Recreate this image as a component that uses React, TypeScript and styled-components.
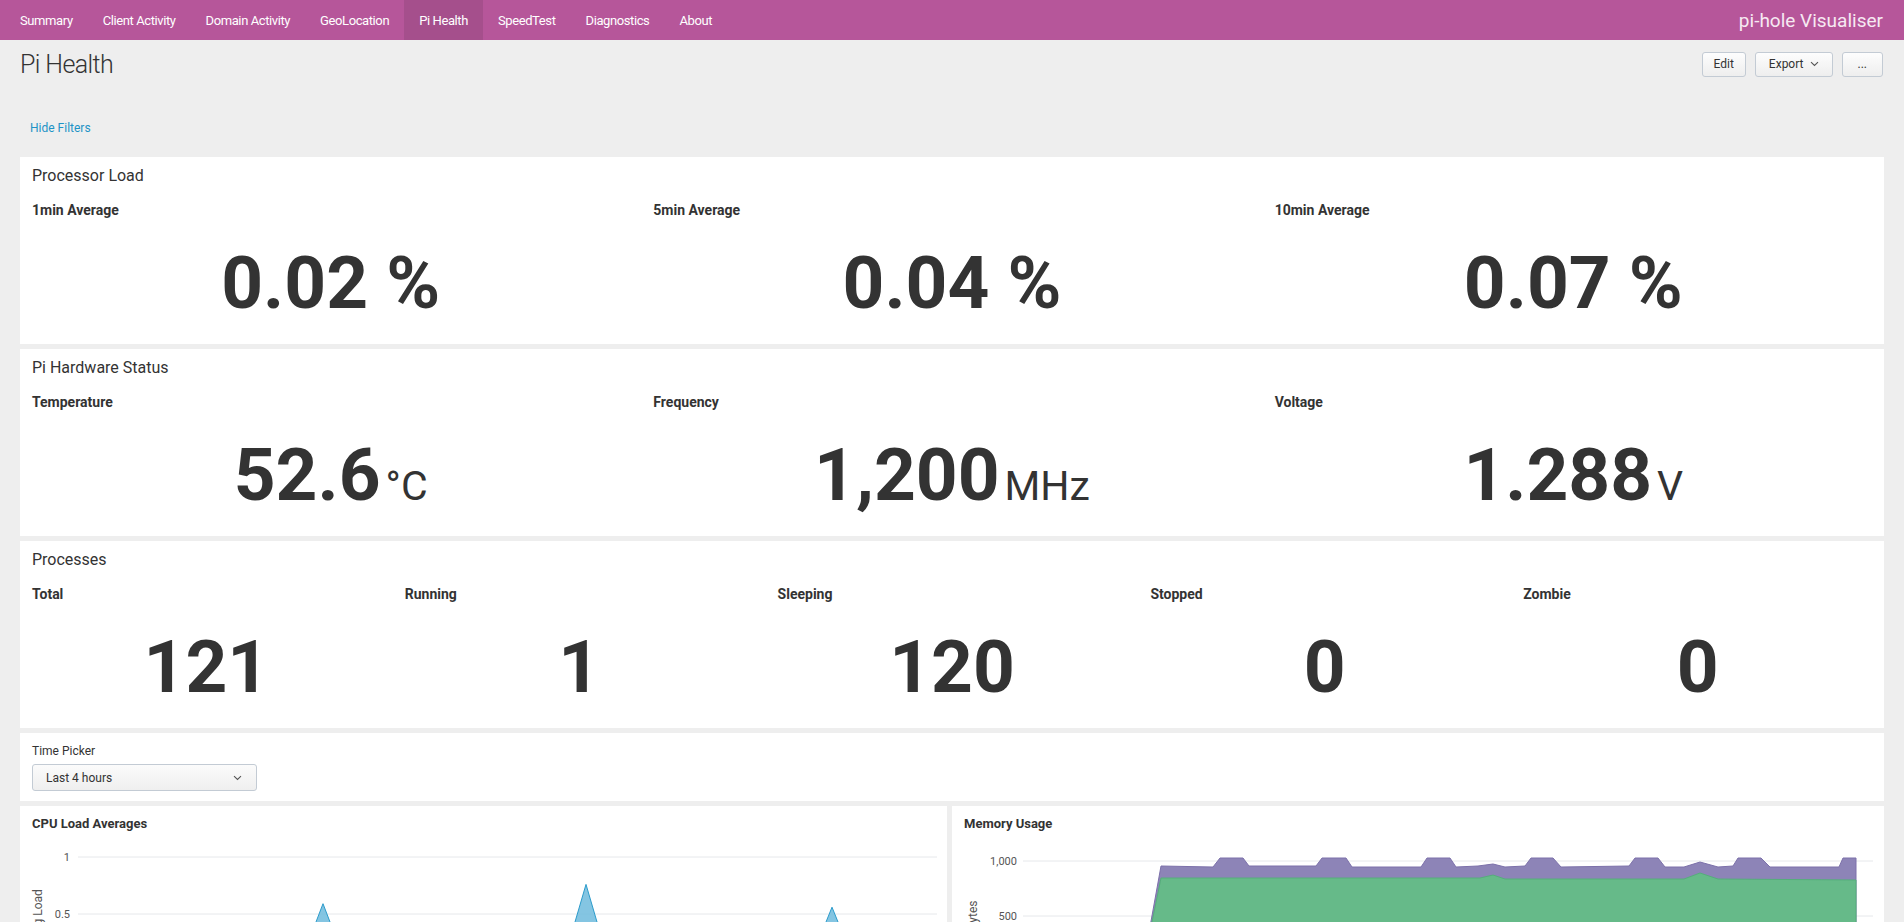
import styled, { createGlobalStyle } from 'styled-components'

const GlobalStyle = createGlobalStyle`
  html, body {
    margin: 0;
    padding: 0;
    background: #eeeeee;
    font-family: Roboto, "Liberation Sans", Arial, sans-serif;
    color: #333;
  }
  * {
    box-sizing: border-box;
  }
`

const NAV_ITEMS = [
  'Summary',
  'Client Activity',
  'Domain Activity',
  'GeoLocation',
  'Pi Health',
  'SpeedTest',
  'Diagnostics',
  'About',
]

const ACTIVE_ITEM = 'Pi Health'

const processorLoad = [
  { label: '1min Average', value: '0.02 %' },
  { label: '5min Average', value: '0.04 %' },
  { label: '10min Average', value: '0.07 %' },
]

const hardware = [
  { label: 'Temperature', value: '52.6', unit: '°C' },
  { label: 'Frequency', value: '1,200', unit: 'MHz' },
  { label: 'Voltage', value: '1.288', unit: 'V' },
]

const processes = [
  { label: 'Total', value: '121' },
  { label: 'Running', value: '1' },
  { label: 'Sleeping', value: '120' },
  { label: 'Stopped', value: '0' },
  { label: 'Zombie', value: '0' },
]

type Stat = { label: string; value: string; unit?: string }

function Chevron() {
  return (
    <svg width="9" height="6" viewBox="0 0 9 6">
      <path d="M1 1.2 L4.5 4.5 L8 1.2" fill="none" stroke="#555" strokeWidth="1.1" />
    </svg>
  )
}

function StatPanel({ title, stats }: { title: string; stats: Stat[] }) {
  return (
    <StatBox>
      <PanelTitle>{title}</PanelTitle>
      <StatGrid $cols={stats.length}>
        {stats.map(s => (
          <StatCell key={s.label}>
            <StatLabel>{s.label}</StatLabel>
            <StatValue>
              {s.value}
              {s.unit && <StatUnit>{s.unit}</StatUnit>}
            </StatValue>
          </StatCell>
        ))}
      </StatGrid>
    </StatBox>
  )
}

// cpu load: small baseline values with three spikes
const CPU_BASE = 131
const CPU_SCALE = 114
function cpuPath() {
  const spikes: [number, number][] = [
    [303, 0.59],
    [566, 0.76],
    [812, 0.56],
  ]
  const pts: [number, number][] = []
  for (let x = 187; x <= 917; x += 12) {
    const near = spikes.find(([cx]) => Math.abs(cx - x) < 24)
    if (near) continue
    const v = 0.03 + ((x * 7) % 5) * 0.008
    pts.push([x, v])
  }
  spikes.forEach(([cx, v]) => {
    pts.push([cx - 24, 0.04])
    pts.push([cx, v])
    pts.push([cx + 24, 0.04])
  })
  pts.sort((a, b) => a[0] - b[0])
  const line = pts.map(([x, v]) => `${x},${(CPU_BASE - v * CPU_SCALE).toFixed(1)}`)
  return {
    area: `M187,${CPU_BASE} L${line.join(' L')} L917,${CPU_BASE} Z`,
    line: `M${line.join(' L')}`,
  }
}

function CpuChart() {
  const { area, line } = cpuPath()
  return (
    <ChartSvg viewBox="0 0 927 260" preserveAspectRatio="xMinYMin meet">
      <GridLine x1="58" x2="917" y1="17" y2="17" />
      <GridLine x1="58" x2="917" y1="74" y2="74" />
      <GridLine x1="58" x2="917" y1="131" y2="131" />
      <AxisText x="50" y="21" textAnchor="end">1</AxisText>
      <AxisText x="50" y="78" textAnchor="end">0.5</AxisText>
      <AxisText x="50" y="135" textAnchor="end">0</AxisText>
      <AxisTitle x="22" y="74" textAnchor="middle" transform="rotate(-90 22 74)">
        Avg Load
      </AxisTitle>
      <path d={area} fill="#6fbbdd" fillOpacity="0.85" />
      <path d={line} fill="none" stroke="#2b9bcb" strokeWidth="1" />
    </ChartSvg>
  )
}

const USED = [
  [190, 131], [209, 26], [261, 27], [268, 18], [291, 18], [297, 26], [364, 26],
  [370, 18], [394, 18], [400, 27], [469, 27], [475, 18], [498, 18], [504, 27],
  [526, 26], [541, 24], [553, 27], [573, 26], [579, 18], [601, 18], [609, 27],
  [677, 26], [683, 18], [706, 18], [713, 27], [732, 27], [748, 22], [766, 27],
  [781, 26], [786, 18], [809, 18], [818, 27], [887, 27], [891, 18], [904, 18],
  [904, 131],
]

const FREE = [
  [190, 131], [209, 38], [260, 38], [528, 38], [541, 35], [553, 39], [732, 39],
  [748, 33], [766, 39], [904, 40], [904, 131],
]

const toPath = (pts: number[][]) => `M${pts.map(p => p.join(',')).join(' L')} Z`

function MemoryChart() {
  return (
    <ChartSvg viewBox="0 0 932 260" preserveAspectRatio="xMinYMin meet">
      <GridLine x1="71" x2="921" y1="21" y2="21" />
      <GridLine x1="71" x2="921" y1="76" y2="76" />
      <GridLine x1="71" x2="921" y1="131" y2="131" />
      <AxisText x="65" y="25" textAnchor="end">1,000</AxisText>
      <AxisText x="65" y="80" textAnchor="end">500</AxisText>
      <AxisText x="65" y="135" textAnchor="end">0</AxisText>
      <AxisTitle x="25" y="90" textAnchor="middle" transform="rotate(-90 25 90)">
        Megabytes
      </AxisTitle>
      <path d={toPath(USED)} fill="#8d84b7" stroke="#7c71aa" strokeWidth="1" />
      <path d={toPath(FREE)} fill="#66ba89" stroke="#55ae7b" strokeWidth="1" />
    </ChartSvg>
  )
}

export default function App() {
  return (
    <>
      <GlobalStyle />
      <NavBar>
        {NAV_ITEMS.map(item => (
          <NavItem key={item} $active={item === ACTIVE_ITEM}>
            {item}
          </NavItem>
        ))}
        <Brand>pi-hole Visualiser</Brand>
      </NavBar>

      <HeaderRow>
        <PageTitle>Pi Health</PageTitle>
        <ButtonGroup>
          <Button>Edit</Button>
          <Button $pad={13}>
            Export <Chevron />
          </Button>
          <Button $pad={15}>...</Button>
        </ButtonGroup>
      </HeaderRow>

      <FilterLink>Hide Filters</FilterLink>

      <Dashboard>
        <StatPanel title="Processor Load" stats={processorLoad} />
        <StatPanel title="Pi Hardware Status" stats={hardware} />
        <StatPanel title="Processes" stats={processes} />

        <PickerPanel>
          <PickerLabel>Time Picker</PickerLabel>
          <Select>
            <span>Last 4 hours</span>
            <Chevron />
          </Select>
        </PickerPanel>

        <ChartRow>
          <ChartPanel>
            <ChartTitle>CPU Load Averages</ChartTitle>
            <CpuChart />
          </ChartPanel>
          <ChartPanel>
            <ChartTitle>Memory Usage</ChartTitle>
            <MemoryChart />
          </ChartPanel>
        </ChartRow>
      </Dashboard>
    </>
  )
}

const NavBar = styled.nav`
  display: flex;
  align-items: stretch;
  height: 40px;
  padding-left: 5px;
  background: #b6569a;
`

const NavItem = styled.a<{ $active?: boolean }>`
  display: flex;
  align-items: center;
  padding: 0 15px;
  font-size: 13px;
  letter-spacing: -0.4px;
  color: #fff;
  cursor: pointer;
  background: ${p => (p.$active ? '#a54f8c' : 'transparent')};
`

const Brand = styled.div`
  margin-left: auto;
  display: flex;
  align-items: center;
  padding-right: 21px;
  font-size: 19px;
  color: #f6e9f2;
`

const HeaderRow = styled.div`
  display: flex;
  align-items: center;
  justify-content: space-between;
  height: 28px;
  margin-top: 10px;
  padding: 0 21px 0 20px;
`

const PageTitle = styled.h1`
  margin: 0;
  font-size: 25px;
  font-weight: 300;
  letter-spacing: -0.6px;
  color: #333;
`

const ButtonGroup = styled.div`
  display: flex;
  gap: 9px;
`

const Button = styled.button<{ $pad?: number }>`
  display: flex;
  align-items: center;
  gap: 6px;
  height: 25px;
  padding: 0 ${p => p.$pad ?? 11}px;
  font-family: Roboto, "Liberation Sans", sans-serif;
  font-size: 12px;
  color: #333;
  background: linear-gradient(#fdfdfd, #eeeeee);
  border: 1px solid #c3cbd4;
  border-radius: 3px;
  cursor: pointer;
`

const FilterLink = styled.a`
  display: block;
  margin: 43px 0 22px;
  padding-left: 30px;
  font-size: 12px;
  line-height: 14px;
  color: #1e93c6;
  cursor: pointer;
`

const Dashboard = styled.div`
  display: flex;
  flex-direction: column;
  gap: 5px;
  padding: 0 20px 20px;
`

const Panel = styled.section`
  background: #fff;
`

const StatBox = styled(Panel)`
  height: 187px;
  padding-top: 9px;
`

const PanelTitle = styled.h2`
  margin: 0;
  padding: 0 12px;
  font-size: 16px;
  font-weight: 400;
  line-height: 20px;
  color: #333;
`

const StatGrid = styled.div<{ $cols: number }>`
  display: grid;
  grid-template-columns: repeat(${p => p.$cols}, 1fr);
`

const StatCell = styled.div`
  padding: 0 12px;
`

const StatLabel = styled.div`
  margin-top: 16px;
  font-size: 14px;
  font-weight: 700;
  line-height: 16px;
  color: #333;
`

const StatValue = styled.div`
  margin-top: 25px;
  text-align: center;
  font-size: 73px;
  font-weight: 700;
  line-height: 80px;
  color: #333;
  white-space: nowrap;
`

const StatUnit = styled.span`
  margin-left: 5px;
  font-size: 41px;
  font-weight: 400;
  line-height: 1;
`

const PickerPanel = styled(Panel)`
  padding: 10px 12px;
`

const PickerLabel = styled.div`
  font-size: 12px;
  line-height: 16px;
  color: #333;
`

const Select = styled.div`
  display: flex;
  align-items: center;
  justify-content: space-between;
  width: 225px;
  height: 27px;
  margin-top: 5px;
  padding: 0 14px 0 13px;
  font-size: 12px;
  color: #333;
  background: linear-gradient(#fbfbfb, #efefef);
  border: 1px solid #c3cbd4;
  border-radius: 3px;
`

const ChartRow = styled.div`
  display: grid;
  grid-template-columns: 927px 1fr;
  gap: 5px;
`

const ChartPanel = styled(Panel)`
  padding-top: 9px;
  height: 300px;
`

const ChartTitle = styled.h3`
  margin: 0 0 7px;
  padding: 0 12px;
  font-size: 13px;
  font-weight: 700;
  line-height: 18px;
  color: #333;
`

const ChartSvg = styled.svg`
  display: block;
  width: 100%;
  height: 260px;
`

const GridLine = styled.line`
  stroke: #e6e8eb;
  stroke-width: 1;
`

const AxisText = styled.text`
  font-family: Roboto, "Liberation Sans", sans-serif;
  font-size: 11px;
  fill: #555;
`

const AxisTitle = styled.text`
  font-family: Roboto, "Liberation Sans", sans-serif;
  font-size: 12px;
  fill: #555;
`
